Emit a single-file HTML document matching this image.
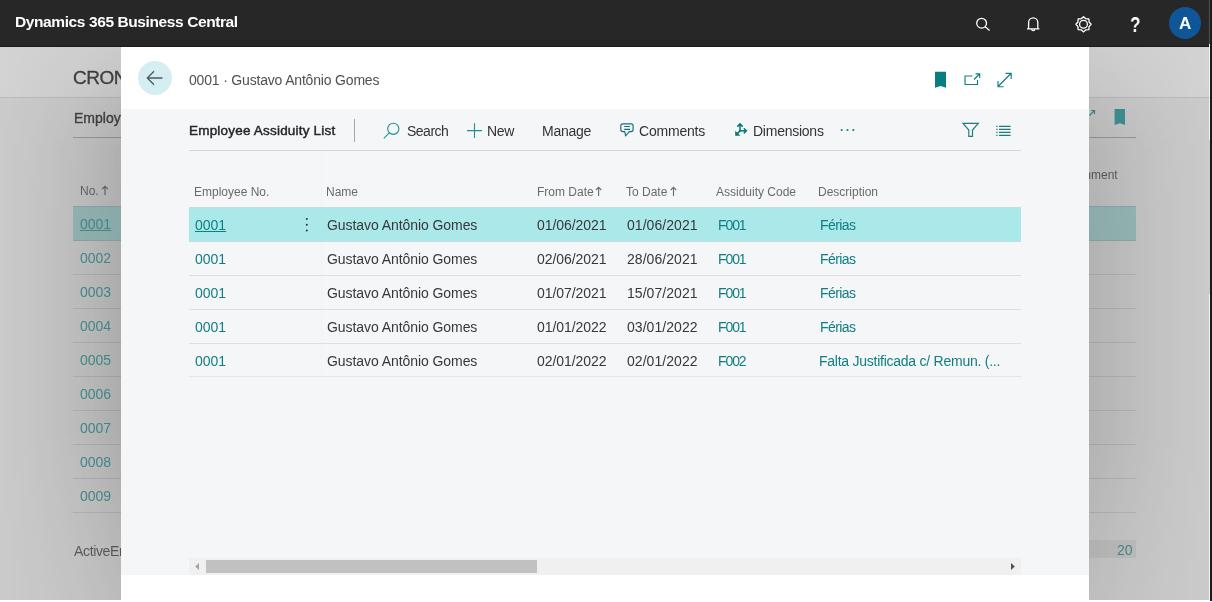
<!DOCTYPE html>
<html><head><meta charset="utf-8">
<style>
*{margin:0;padding:0;box-sizing:border-box}
html,body{width:1212px;height:602px;overflow:hidden;background:#fff}
body{position:relative;font-family:"Liberation Sans",sans-serif}
.a{position:absolute}
.t{position:absolute;white-space:nowrap;line-height:1;will-change:transform}
svg{position:absolute;overflow:visible}
#bar{left:0;top:0;width:1212px;height:47px;background:#272727;border-bottom:1px solid #1b1b1b}
#bg{left:0;top:47px;width:1210px;height:553px;background:#cbcbcc}
#edge{left:1210px;top:0;width:2px;height:601px;background:#1c1c1c}
#modal{left:121px;top:47px;width:968px;height:555px;background:#fff}
#content{left:121px;top:109px;width:968px;height:466px;background:#f5f6f8}
.bgt{color:rgba(0,0,0,.64)}
.bgl{background:rgba(0,0,0,.09)}
.bteal{color:#428586}
.hl{color:#222}
.th{font-size:12px;color:#6a6a6a}
.td{font-size:14px;color:#383838;letter-spacing:-0.07px}
.lk{font-size:14px;color:#0f7e83}
.rl{left:189px;width:832px;height:1px;background:#dedfe1}
</style></head><body>
<!-- top bar -->
<div id="bar" class="a"></div>
<div class="t" style="left:14.5px;top:14px;font-size:15.5px;font-weight:700;color:#fff;letter-spacing:-0.4px">Dynamics 365 Business Central</div>
<svg style="left:0;top:0" width="1212" height="47">
  <g fill="none" stroke="#fff" stroke-width="1.3">
    <circle cx="981.6" cy="23.2" r="4.9"/>
    <path d="M985.1 26.7 L989.6 30.6"/>
    <path d="M1027 28.8 L1039.4 28.8 M1028.6 28.8 L1028.6 22.4 A4.6 4.6 0 0 1 1037.8 22.4 L1037.8 28.8 M1031.7 29.2 A1.5 1.5 0 0 0 1034.7 29.2"/>
    <circle cx="1083.5" cy="24.3" r="3.9"/>
    <path d="M1083.50 16.70 L1085.80 18.76 L1088.87 18.93 L1089.04 22.00 L1091.10 24.30 L1089.04 26.60 L1088.87 29.67 L1085.80 29.84 L1083.50 31.90 L1081.20 29.84 L1078.13 29.67 L1077.96 26.60 L1075.90 24.30 L1077.96 22.00 L1078.13 18.93 L1081.20 18.76 Z" stroke-linejoin="round"/>
  </g>
  <circle cx="1185" cy="23" r="16" fill="#0e5698"/>
</svg>
<div class="t" style="left:1130.3px;top:14px;font-size:22px;font-weight:700;color:#fff;transform:scaleX(0.78);transform-origin:0 0">?</div>
<div class="t" style="left:1178.5px;top:15px;font-size:17px;font-weight:700;color:#fff">A</div>

<!-- dimmed background page -->
<div id="bg" class="a"></div>
<div id="edge" class="a"></div>
<div class="a" style="left:0;top:47px;width:1210px;height:50px;background:#d3d3d3"></div>
<div class="a" style="left:0;top:47px;width:121px;height:553px;background:linear-gradient(90deg,rgba(0,0,0,0) 0px,rgba(0,0,0,.035) 40px,rgba(0,0,0,.08) 80px,rgba(0,0,0,.15) 121px);-webkit-mask-image:linear-gradient(180deg,rgba(0,0,0,.25) 0px,rgba(0,0,0,.55) 50px,rgba(0,0,0,.9) 103px,#000 200px,#000 380px,rgba(0,0,0,.5) 553px)"></div>
<div class="a" style="left:1089px;top:47px;width:121px;height:553px;background:linear-gradient(270deg,rgba(0,0,0,0) 0px,rgba(0,0,0,.03) 40px,rgba(0,0,0,.07) 80px,rgba(0,0,0,.12) 121px);-webkit-mask-image:linear-gradient(180deg,rgba(0,0,0,.25) 0px,rgba(0,0,0,.55) 50px,rgba(0,0,0,.9) 103px,#000 200px,#000 380px,rgba(0,0,0,.5) 553px)"></div>
<div class="a" style="left:1209px;top:0;width:1px;height:44px;background:#505050"></div>
<div class="a" style="left:1209px;top:44px;width:1px;height:96px;background:#f4f4f4"></div>
<div class="a" style="left:1209px;top:294px;width:1px;height:306px;background:#f4f4f4"></div>
<div class="a" style="left:0;top:97px;width:1210px;height:1px;background:rgba(0,0,0,.07)"></div>
<div class="t bgt" style="left:73.3px;top:68px;font-size:19px;letter-spacing:-0.45px;color:rgba(0,0,0,.68);-webkit-text-stroke:0.35px rgba(0,0,0,.6)">CRONOGRAMA</div>
<div class="t bgt" style="left:74px;top:111px;font-size:14px;color:rgba(0,0,0,.62);-webkit-text-stroke:0.45px rgba(0,0,0,.55)">Employees</div>
<div class="a" style="left:73px;top:137px;width:1063px;height:1px;background:rgba(0,0,0,.23)"></div>
<div class="t" style="left:80px;top:184.5px;font-size:12px;color:rgba(0,0,0,.5)">No.</div>
<svg style="left:0;top:0" width="1" height="1"><path d="M105 195 L105 186.5 M102.3 189 L105 186.2 L107.7 189" fill="none" stroke="rgba(0,0,0,.5)" stroke-width="1.1"/></svg>
<div class="t bgt" style="left:1081px;top:169px;font-size:12px;color:rgba(0,0,0,.55)">mment</div>
<div class="a" style="left:73px;top:206px;width:1063px;height:35px;background:rgba(105,165,163,.55);border-top:1px solid rgba(0,0,0,.07);border-bottom:1px solid rgba(0,0,0,.07)"></div>
<div class="t bteal" style="left:80px;top:217px;font-size:14px;text-decoration:underline">0001</div>
<div class="t bteal" style="left:80px;top:251px;font-size:14px">0002</div>
<div class="t bteal" style="left:80px;top:285px;font-size:14px">0003</div>
<div class="t bteal" style="left:80px;top:319px;font-size:14px">0004</div>
<div class="t bteal" style="left:80px;top:353px;font-size:14px">0005</div>
<div class="t bteal" style="left:80px;top:387px;font-size:14px">0006</div>
<div class="t bteal" style="left:80px;top:421px;font-size:14px">0007</div>
<div class="t bteal" style="left:80px;top:455px;font-size:14px">0008</div>
<div class="t bteal" style="left:80px;top:489px;font-size:14px">0009</div>
<div class="a bgl" style="left:73px;top:274px;width:1063px;height:1px"></div>
<div class="a bgl" style="left:73px;top:308px;width:1063px;height:1px"></div>
<div class="a bgl" style="left:73px;top:342px;width:1063px;height:1px"></div>
<div class="a bgl" style="left:73px;top:376px;width:1063px;height:1px"></div>
<div class="a bgl" style="left:73px;top:410px;width:1063px;height:1px"></div>
<div class="a bgl" style="left:73px;top:444px;width:1063px;height:1px"></div>
<div class="a bgl" style="left:73px;top:478px;width:1063px;height:1px"></div>
<div class="a bgl" style="left:73px;top:512px;width:1063px;height:1px"></div>
<div class="t" style="left:74px;top:543.5px;font-size:14px;letter-spacing:-0.35px;color:rgba(0,0,0,.55)">ActiveEmployees</div>
<div class="a" style="left:1000px;top:540px;width:136px;height:18px;background:rgba(0,0,0,.05)"></div>
<div class="t bteal" style="left:1117px;top:543px;font-size:14px">20</div>
<svg style="left:0;top:0" width="1212" height="602">
  <path d="M1089.5 115.5 L1094.5 110.5 M1091 110.5 L1094.5 110.5 L1094.5 114" fill="none" stroke="#3a7f80" stroke-width="1.2"/>
  <path d="M1114.6 109 L1125 109 L1125 125 L1119.8 123.3 L1114.6 125 Z" fill="#3d8a8c"/>
</svg>

<!-- modal -->
<div id="modal" class="a"></div>
<div id="content" class="a"></div>

<!-- modal header -->
<svg style="left:0;top:0" width="1212" height="602">
  <circle cx="155" cy="78" r="17" fill="#d4eef1"/>
  <path d="M147.5 78 L162.5 78 M154 71.2 L147.3 78 L154 84.8" fill="none" stroke="#4b5b5c" stroke-width="1.3"/>
  <path d="M935 71.8 L946 71.8 L946 87.7 L940.5 86 L935 87.7 Z" fill="#0a7d82"/>
  <g fill="none" stroke="#127f84" stroke-width="1.15">
    <path d="M972.5 76 L965 76 L965 84.5 L977.5 84.5 L977.5 80"/>
    <path d="M974 79.5 L979.5 74 M975.5 73.8 L979.7 73.8 L979.7 78"/>
    <path d="M998 86.5 L1011 73.5 M1005.5 73.4 L1011.2 73.4 L1011.2 79 M998 81 L998 86.7 L1003.6 86.7"/>
  </g>
</svg>
<div class="t" style="left:189px;top:73px;font-size:14px;color:#505050;letter-spacing:-0.18px">0001 · Gustavo Antônio Gomes</div>

<!-- toolbar -->
<div class="t" style="left:189px;top:123.8px;font-size:13.5px;color:#262626;letter-spacing:0.2px;-webkit-text-stroke:0.45px #262626">Employee Assiduity List</div>
<div class="a" style="left:354px;top:119px;width:1px;height:23px;background:#a6a6a6"></div>
<svg style="left:0;top:0" width="1212" height="602">
  <g fill="none" stroke="#1f9196" stroke-width="1.1">
    <circle cx="393.3" cy="128.8" r="5.6"/>
    <path d="M389.3 132.8 L383.8 138.3"/>
    <path d="M474.5 123.2 L474.5 138 M467 130.6 L482 130.6"/>
    
  </g>
  <g fill="none" stroke="#166f74" stroke-width="1.15" stroke-linejoin="round"><path d="M622.8 123.8 L631.1 123.8 Q633.1 123.8 633.1 125.8 L633.1 129.6 Q633.1 131.6 631.1 131.6 L629.2 131.6 L625.6 136 L624.8 131.6 L622.8 131.6 Q620.8 131.6 620.8 129.6 L620.8 125.8 Q620.8 123.8 622.8 123.8 Z"/><path d="M624.2 126.5 L630 126.5 M624.2 129.3 L630 129.3"/></g>
  <g fill="none" stroke="#0a757a" stroke-width="1.5" stroke-linecap="butt" stroke-linejoin="miter">
    <path d="M740 131.5 L740 124.2 M737.3 126.6 L740 123.9 L742.7 126.6"/>
    <path d="M739.2 130.8 L746.2 130.8 M743.8 128.2 L746.4 130.8 L743.8 133.4"/>
    <path d="M740.3 130.6 L736.3 134.6"/>
  </g>
  <path d="M735.2 130.8 L735.2 135.8 L740.4 135.8 Z" fill="#0a757a"/>
  <g fill="#0d7e83"><circle cx="841.7" cy="130" r="1.1"/><circle cx="847.5" cy="130" r="1.1"/><circle cx="853.3" cy="130" r="1.1"/>
  </g>
  <g fill="none" stroke="#1d7a7f" stroke-width="1.15">
    <path d="M963 123.3 L978.3 123.3 L972.5 130 L972.5 136.4 L968.8 136.4 L968.8 130 Z"/>
    <path d="M999 126.4 L1010.6 126.4 M999 129.4 L1010.6 129.4 M999 132.4 L1010.6 132.4 M999 135.4 L1010.6 135.4"/>
    <path d="M996.3 126.4 L997.6 126.4 M996.3 129.4 L997.6 129.4 M996.3 132.4 L997.6 132.4 M996.3 135.4 L997.6 135.4"/>
  </g>
</svg>
<div class="t" style="left:407px;top:124px;font-size:14px;color:#333;letter-spacing:-0.5px">Search</div>
<div class="t" style="left:487px;top:124px;font-size:14px;color:#333;letter-spacing:-0.3px">New</div>
<div class="t" style="left:542px;top:124px;font-size:14px;color:#333;letter-spacing:-0.25px">Manage</div>
<div class="t" style="left:639px;top:124px;font-size:14px;color:#333;letter-spacing:-0.2px">Comments</div>
<div class="t" style="left:753px;top:124px;font-size:14px;color:#333;letter-spacing:-0.25px">Dimensions</div>
<div class="a" style="left:189px;top:150px;width:832px;height:1px;background:#d5d6d8"></div>

<!-- table header -->
<div class="a" style="left:321px;top:151px;width:1px;height:225px;background:rgba(0,0,0,.015)"></div>
<div class="t th" style="left:194px;top:186px">Employee No.</div>
<div class="t th" style="left:326px;top:186px">Name</div>
<div class="t th" style="left:537px;top:186px">From Date</div>
<div class="t th" style="left:626px;top:186px">To Date</div>
<div class="t th" style="left:716px;top:186px">Assiduity Code</div>
<div class="t th" style="left:818px;top:186px">Description</div>

<svg style="left:0;top:0" width="1" height="1"><g fill="none" stroke="#6a6a6a" stroke-width="1.1"><path d="M598.6 196 L598.6 187.5 M595.9 190 L598.6 187.2 L601.3 190"/><path d="M673.5 196 L673.5 187.5 M670.8 190 L673.5 187.2 L676.2 190"/></g></svg>
<!-- rows -->
<div class="a" style="left:189px;top:207px;width:832px;height:35px;background:#abe8ea;border-top:1px solid #c3dde0;border-bottom:1px solid #c3dde0"></div>
<div class="a rl" style="top:275px"></div>
<div class="a rl" style="top:309px"></div>
<div class="a rl" style="top:343px"></div>
<div class="a rl" style="top:376px;background:#e3e4e6"></div>

<div class="t lk" style="left:195px;top:218px;text-decoration:underline">0001</div>
<svg style="left:0;top:0" width="1" height="1"><g fill="#333"><circle cx="306.8" cy="219" r="1"/><circle cx="306.8" cy="224.7" r="1"/><circle cx="306.8" cy="230.4" r="1"/></g></svg>
<div class="t td" style="left:327px;top:218px">Gustavo Antônio Gomes</div>
<div class="t td" style="left:537px;top:218px">01/06/2021</div>
<div class="t td" style="letter-spacing:0.05px;left:627px;top:218px">01/06/2021</div>
<div class="t lk" style="letter-spacing:-1.1px;left:717.8px;top:218px">F001</div>
<div class="t lk" style="letter-spacing:-0.6px;left:819.5px;top:218px">Férias</div>

<div class="t lk" style="left:195px;top:252px">0001</div>
<div class="t td" style="left:327px;top:252px">Gustavo Antônio Gomes</div>
<div class="t td" style="left:537px;top:252px">02/06/2021</div>
<div class="t td" style="letter-spacing:0.05px;left:627px;top:252px">28/06/2021</div>
<div class="t lk" style="letter-spacing:-1.1px;left:717.8px;top:252px">F001</div>
<div class="t lk" style="letter-spacing:-0.6px;left:819.5px;top:252px">Férias</div>

<div class="t lk" style="left:195px;top:286px">0001</div>
<div class="t td" style="left:327px;top:286px">Gustavo Antônio Gomes</div>
<div class="t td" style="left:537px;top:286px">01/07/2021</div>
<div class="t td" style="letter-spacing:0.05px;left:627px;top:286px">15/07/2021</div>
<div class="t lk" style="letter-spacing:-1.1px;left:717.8px;top:286px">F001</div>
<div class="t lk" style="letter-spacing:-0.6px;left:819.5px;top:286px">Férias</div>

<div class="t lk" style="left:195px;top:320px">0001</div>
<div class="t td" style="left:327px;top:320px">Gustavo Antônio Gomes</div>
<div class="t td" style="left:537px;top:320px">01/01/2022</div>
<div class="t td" style="letter-spacing:0.05px;left:627px;top:320px">03/01/2022</div>
<div class="t lk" style="letter-spacing:-1.1px;left:717.8px;top:320px">F001</div>
<div class="t lk" style="letter-spacing:-0.6px;left:819.5px;top:320px">Férias</div>

<div class="t lk" style="left:195px;top:354px">0001</div>
<div class="t td" style="left:327px;top:354px">Gustavo Antônio Gomes</div>
<div class="t td" style="left:537px;top:354px">02/01/2022</div>
<div class="t td" style="letter-spacing:0.05px;left:627px;top:354px">02/01/2022</div>
<div class="t lk" style="letter-spacing:-1.1px;left:717.8px;top:354px">F002</div>
<div class="t lk" style="letter-spacing:-0.25px;left:819px;top:354px">Falta Justificada c/ Remun. (...</div>

<!-- scrollbar -->
<div class="a" style="left:189px;top:558px;width:832px;height:17px;background:#f0f0f0"></div>
<div class="a" style="left:206px;top:560px;width:331px;height:13px;background:#c1c1c1"></div>
<svg style="left:0;top:0" width="1212" height="602">
  <path d="M199 563 L199 570 L195.2 566.5 Z" fill="#a3a3a3"/>
  <path d="M1011 563 L1011 570 L1014.8 566.5 Z" fill="#505050"/>
</svg>
</body></html>
